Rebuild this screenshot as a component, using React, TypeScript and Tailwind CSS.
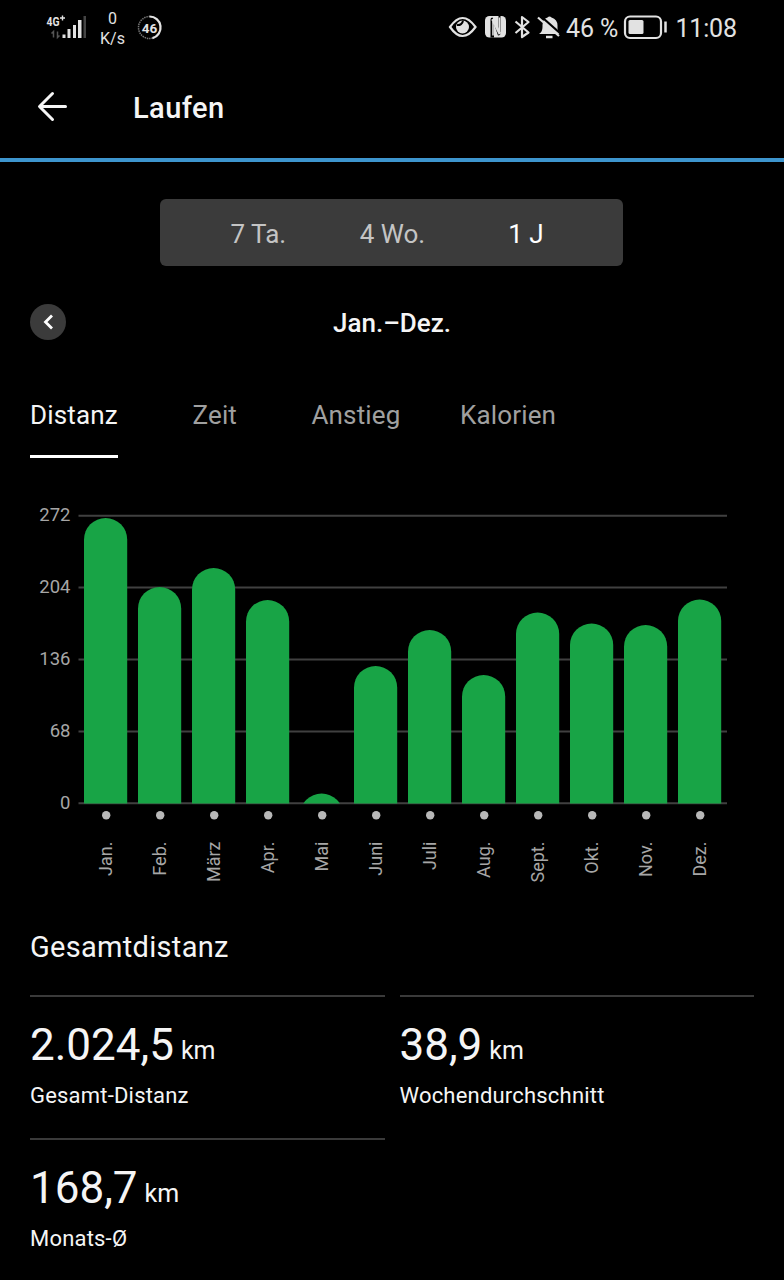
import { useState } from "react";

const ranges = [
  { label: "7 Ta.", className: "w-[134px]" },
  { label: "4 Wo.", className: "w-[134px]" },
  { label: "1 J", className: "w-[133px]" },
];

const tabs = [
  { label: "Distanz", className: "w-[162.5px]" },
  { label: "Zeit", className: "w-[119px]" },
  { label: "Anstieg", className: "w-[148.5px]" },
  { label: "Kalorien", className: "" },
];

// top is the y coordinate of the bar inside the chart
const months = [
  { label: "Jan.", top: 28 },
  { label: "Feb.", top: 97 },
  { label: "März", top: 78 },
  { label: "Apr.", top: 110 },
  { label: "Mai", top: 303.5 },
  { label: "Juni", top: 176 },
  { label: "Juli", top: 140 },
  { label: "Aug.", top: 185 },
  { label: "Sept.", top: 122.5 },
  { label: "Okt.", top: 133.5 },
  { label: "Nov.", top: 135 },
  { label: "Dez.", top: 109.5 },
];

const ticks = [272, 204, 136, 68, 0];

const stats = [
  { value: "2.024,5", label: "Gesamt-Distanz" },
  { value: "38,9", label: "Wochendurchschnitt" },
  { value: "168,7", label: "Monats-Ø" },
];

function StatusBar() {
  return (
    <div className="flex h-[54px] items-start justify-between pl-[45px] pr-[47px] text-[#e2e2e2]">
      <div className="flex">
        <svg width="44" height="54" fill="#e2e2e2">
          <text x="1.5" y="26" fontSize="13" fontWeight="700" textLength="13" lengthAdjust="spacingAndGlyphs">4G</text>
          <path d="M17.5 15.5v5M15 18h5" stroke="#e2e2e2" strokeWidth="1.4" />
          <path d="M8.5 37.5v-6l-2 2M12.5 31.5v6l2-2" stroke="#555" strokeWidth="1.5" fill="none" />
          <rect x="17.5" y="34.5" width="3" height="3.5" />
          <rect x="22.5" y="29" width="3" height="9" />
          <rect x="28" y="25" width="3" height="13" />
          <rect x="33" y="20" width="3.5" height="18" />
          <rect x="38.5" y="16" width="2.5" height="22" fill="#444" />
        </svg>
        <div className="ml-[8.5px] w-[30px] whitespace-nowrap pt-[9px] text-center text-base leading-5">
          <p>0</p>
          <p>K/s</p>
        </div>
        <svg width="30" height="54" className="ml-[6.5px]" fill="none">
          <circle cx="15.5" cy="27.5" r="11" stroke="#777" strokeWidth="1.5" strokeDasharray="1.5 0.8" />
          <path d="M15.5 16.5a11 11 0 0 1 3 21.6" stroke="#e2e2e2" strokeWidth="2.2" />
          <text x="15.5" y="32.5" textAnchor="middle" fontSize="13.5" fontWeight="700" fill="#e2e2e2">46</text>
        </svg>
      </div>
      <div className="flex">
        <svg width="118" height="54" fill="none" stroke="#e2e2e2" strokeWidth="2.2">
          <path d="M2 27q12.5-18 25.5 0q-13 18-25.5 0z" />
          <circle cx="14.5" cy="27" r="6.5" fill="#e2e2e2" stroke="none" />
          <path d="M9 25a5 5 0 0 0 6-4.5" strokeWidth="2" stroke="#000" />
          <rect x="37" y="16" width="21" height="21.5" rx="4.5" fill="#e2e2e2" stroke="none" />
          <path d="M46 37.5h-3.500V19.500q0-2 2-2l6 13V16h2v17q0 2.500-2.500 2.500L46 24z" fill="#000" stroke="none" />
          <path d="M45 21.500v14M51.500 31V17.500" strokeWidth="1.600" />
          <path d="M44.500 19 52 34" strokeWidth="2.800" />
          <path d="M67.500 21.500 80.500 32.500 74 37V17l6.500 5L67.500 33" strokeWidth="2.200" strokeLinejoin="round" />
          <path d="M91 34q3.500-2 3.500-7v-2q0-6 5-7.500q2-2 4 0q6 2 6 8v3q0 3 2.500 5.500z" fill="#e2e2e2" stroke="none" />
          <path d="M91.500 15 113 34" stroke="#000" strokeWidth="2.200" />
          <path d="M90 17.500 111 36" strokeWidth="2.200" />
          <path d="M98 37h6.500" strokeWidth="2.500" />
        </svg>
        <span className="w-[57px] whitespace-nowrap pt-[15px] text-[25px] leading-7 tracking-[-0.1px]">46 %</span>
        <svg width="44" height="54" fill="none" stroke="#e2e2e2">
          <rect x="2" y="16.5" width="36" height="21.5" rx="5" strokeWidth="2.2" />
          <rect x="5.5" y="20" width="15" height="14" rx="1.5" fill="#e2e2e2" stroke="none" />
          <path d="M42.5 21.5v11" strokeWidth="2.5" />
        </svg>
        <span className="ml-[8.5px] w-[61.5px] whitespace-nowrap pt-[15px] text-[25px] leading-7 tracking-[-0.2px]">11:08</span>
      </div>
    </div>
  );
}

function DistanceChart() {
  return (
    <svg width="784" height="410" className="block">
      {ticks.map((tick, i) => (
        <g key={tick}>
          <line x1="78.5" x2="727" y1={25.7 + i * 71.9} y2={25.7 + i * 71.9} stroke="#404040" strokeWidth="2" />
          <text x="70.5" y={31 + i * 72} textAnchor="end" fontSize="18.5" fill="#a6a6a6">
            {tick}
          </text>
        </g>
      ))}
      <clipPath id="plot">
        <rect x="79" y="0" width="648" height="313.5" />
      </clipPath>
      {months.map((month, i) => {
        const x = 84 + i * 54;
        return (
          <g key={month.label}>
            <rect x={x} y={month.top} width="43.2" height="340" rx="21.6" fill="#18a446" clipPath="url(#plot)" />
            <circle cx={x + 22.2} cy="325.3" r="4.2" fill="#b8b8b8" />
            <text
              transform={`translate(${x + 28} 351.5) rotate(-90)`}
              textAnchor="end"
              fontSize="18"
              fill="#a6a6a6"
            >
              {month.label}
            </text>
          </g>
        );
      })}
    </svg>
  );
}

export default function App() {
  const [range, setRange] = useState("1 J");
  const [tab, setTab] = useState("Distanz");

  return (
    <div className="h-[1280px] w-[784px] overflow-hidden bg-black font-[Roboto,sans-serif] text-[#f5f5f5]">
      <StatusBar />
      <header className="flex h-[108px] items-center border-b-4 border-[#3d95ce] pl-[37px]">
        <svg width="32" height="32" fill="none" stroke="#f5f5f5" strokeWidth="3" strokeLinecap="round" strokeLinejoin="round">
          <path d="M28.5 16.5H3M15.5 3.5 2.5 16.5l13 13" />
        </svg>
        <h1 className="ml-16 pt-1 text-[29px] font-medium leading-8 tracking-[0.45px]">Laufen</h1>
      </header>

      <div className="ml-[160.4px] mt-[37px] flex h-[67px] w-[463px] justify-center rounded-md bg-[#3b3b3b]">
        {ranges.map((item) => (
          <button
            key={item.label}
            onClick={() => setRange(item.label)}
            className={`pt-[3px] text-[26px] ${item.className} ${range === item.label ? "text-white" : "text-[#c4c4c4]"}`}
          >
            {item.label}
          </button>
        ))}
      </div>

      <div className="mt-[37px] grid h-[38px] grid-cols-[36px_1fr_36px] px-[30px]">
        <button className="mt-[0.5px] flex h-9 w-9 items-center justify-center rounded-full bg-[#3b3b3b]">
          <svg width="12" height="16" fill="none" stroke="white" strokeWidth="2.8">
            <path d="M10 1.5 3.5 8l6.5 6.5" />
          </svg>
        </button>
        <h2 className="text-center text-[26px] font-medium leading-10">Jan.–Dez.</h2>
      </div>

      <nav className="mt-[55px] flex h-[64px] px-[30px] text-[26px] leading-9 tracking-[0.15px]">
        {tabs.map((item) => (
          <div key={item.label} className={item.className}>
            <button
              onClick={() => setTab(item.label)}
              className={`h-[62px] border-b-[3.5px] pb-[22px] ${tab === item.label ? "border-white text-[#f5f5f5]" : "border-transparent text-[#a0a0a0]"}`}
            >
              {item.label}
            </button>
          </div>
        ))}
      </nav>

      <div className="mt-[30px]">
        <DistanceChart />
      </div>

      <section className="mt-[30px] px-[30px]">
        <h2 className="text-[29px] leading-[34px] tracking-[0.3px]">Gesamtdistanz</h2>
        <div className="mt-[31px] grid grid-cols-2 gap-x-[15px]">
          {stats.map((stat) => (
            <div key={stat.label} className="h-[143px] border-t-2 border-[#3a3a3a] pt-[22px]">
              <p className="h-[52px] whitespace-nowrap text-[44px] leading-[52px]">
                {stat.value}
                <span className="ml-[7px] align-[1px] text-[25px] leading-none">km</span>
              </p>
              <p className="mt-[12px] text-[22px] leading-[26px] tracking-[0.2px]">{stat.label}</p>
            </div>
          ))}
        </div>
      </section>
    </div>
  );
}
